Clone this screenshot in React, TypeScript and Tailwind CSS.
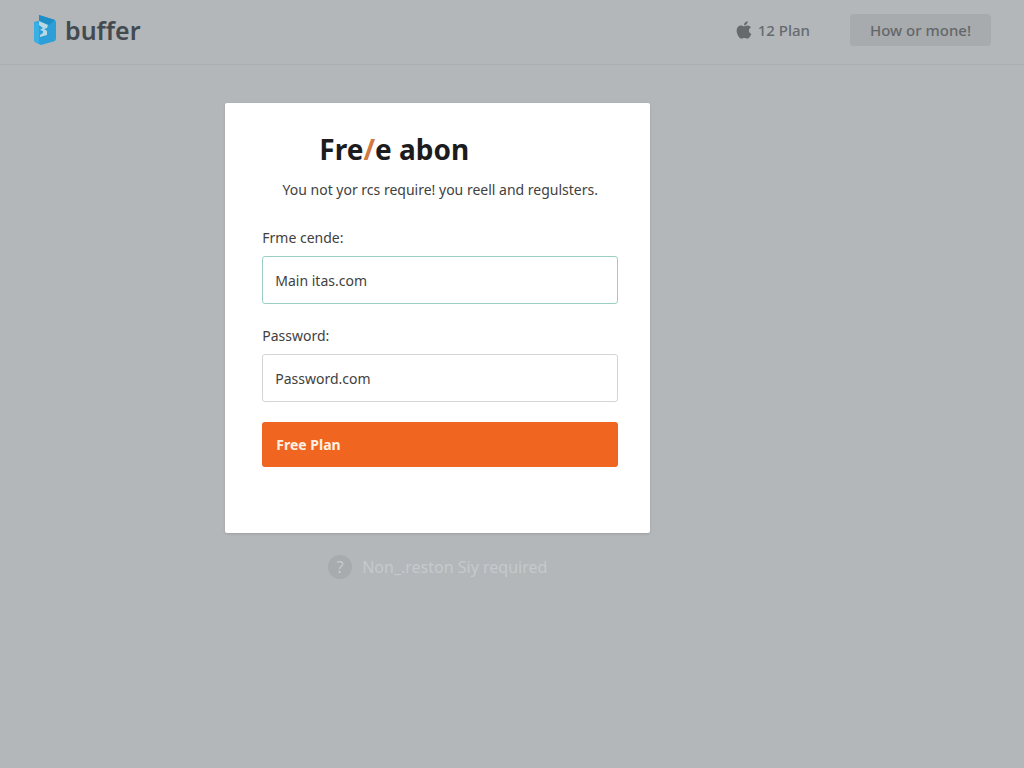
import React from "react";
import { FaApple } from "react-icons/fa";

function Logo() {
  return (
    <a href="#" className="flex items-center gap-2 text-[#434a50]">
      <svg width="24" height="32" viewBox="0 0 24 32" aria-hidden="true">
        <path
          d="M6 1 L22 6 L23 8 V25 L22 27 L8 31 L2 28 L1 26 V8 L6 7 Z"
          fill="#2d9fd8"
        />
        <path d="M6 1 L22 6 L16 11 L6 7 Z" fill="#1f8ec6" />
        <path d="M1 8 L6 9 V30 L2 28 L1 26 Z" fill="#38b0e6" />
        <path
          d="M6 7 L15 11 L14 14 L11 15 L14 17 V21 L7 23 V21 L10 19 V17 L7 16 L10 14 L6 11 Z"
          fill="#b9d8e4"
        />
      </svg>
      <span className="text-[25px] leading-8 font-semibold">buffer</span>
    </a>
  );
}

function Header() {
  return (
    <header className="flex h-[65px] items-center justify-between border-b border-[#abafb2] pr-[33px] pb-1 pl-[33px]">
      <Logo />
      <nav className="flex items-center gap-10 text-[15px] font-medium text-[#666a6d]">
        <a href="#" className="flex items-center gap-1">
          <FaApple className="size-5" />
          12 Plan
        </a>
        <button
          type="button"
          className="h-8 rounded bg-[#a7abae] px-5 text-[#63676a]"
        >
          How or mone!
        </button>
      </nav>
    </header>
  );
}

type FieldProps = {
  id: string;
  label: string;
  value: string;
  border: string;
};

function Field({ id, label, value, border }: FieldProps) {
  return (
    <div className="mb-5">
      <label htmlFor={id} className="mb-1.5 block text-sm leading-6">
        {label}
      </label>
      <input
        id={id}
        type="text"
        defaultValue={value}
        className={`h-12 w-full rounded-[3px] border bg-white px-3 text-sm outline-none ${border}`}
      />
    </div>
  );
}

function SignupCard() {
  return (
    <form className="rounded-xs bg-white pt-[26px] pr-8 pb-[66px] pl-[37px] text-[#414141] shadow-sm">
      <h1 className="mr-[92px] text-center text-[28px] leading-10 font-bold text-[#1c1c1e]">
        Fre<span className="text-[#d07a42]">/</span>e abon
      </h1>
      <p className="mt-[9px] mb-6 text-center text-sm leading-6">
        You not yor rcs require! you reell and regulsters.
      </p>
      <Field
        id="name"
        label="Frme cende:"
        value="Main itas.com"
        border="border-[#9bcfc3]"
      />
      <Field
        id="password"
        label="Password:"
        value="Password.com"
        border="border-[#d3d4d6]"
      />
      <button
        type="button"
        className="h-[45px] w-full rounded-[3px] bg-[#f0651f] px-[14px] text-left text-sm font-bold text-[#fff1e2]"
      >
        Free Plan
      </button>
    </form>
  );
}

export default function App() {
  return (
    <div className="min-h-screen bg-[#b3b7ba] font-['Noto_Sans',sans-serif]">
      <Header />
      <main className="mr-4 ml-[22%] max-w-[425px] pt-[38px]">
        <SignupCard />
        <p className="mt-[22px] flex items-center justify-center gap-[10px] text-base leading-6 text-[#c6c9cc]">
          <span className="flex size-6 items-center justify-center rounded-full bg-[#a7abae]">
            ?
          </span>
          Non_.reston Siy required
        </p>
      </main>
    </div>
  );
}
